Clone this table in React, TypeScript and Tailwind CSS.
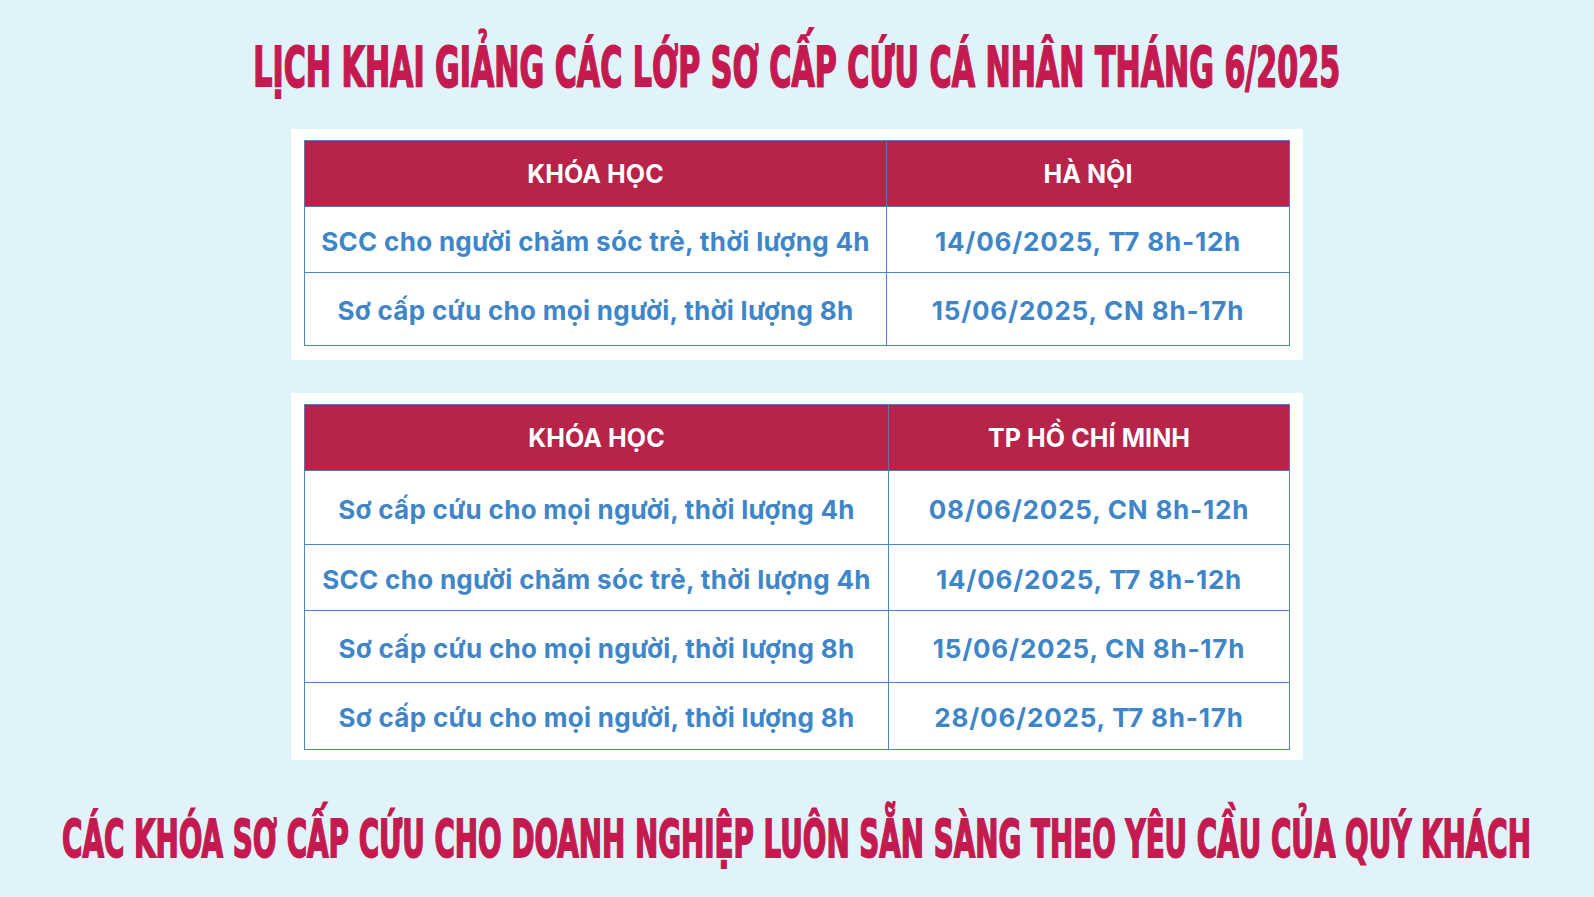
import React from "react";

const headFont = { fontFamily: '"DejaVu Sans Condensed", "DejaVu Sans", sans-serif' };

type Row = [string, string];

function ScheduleTable({ city, rows, col1, heights, pb }: { city: string; rows: Row[]; col1: string; heights: string[]; pb: string }) {
  return (
    <div className={`bg-white px-[13px] pt-[11px] ${pb}`}>
      <table className="w-[986px] border-collapse border-[1.5px] border-[#4a86c8] font-['Inter',sans-serif]">
        <thead>
          <tr className="h-[66px] bg-[#b8234a]">
            <th className={`${col1} pt-[3px] border-[1.5px] border-[#6a70b2] text-[25px] font-bold text-white tracking-[0.1px]`}>KHÓA HỌC</th>
            <th className="pt-[3px] border-[1.5px] border-[#6a70b2] text-[25px] font-bold text-white tracking-[0.1px]">{city}</th>
          </tr>
        </thead>
        <tbody>
          {rows.map((r, i) => (
            <tr key={i} className={heights[i]}>
              <td className="pt-[3px] border-[1.5px] border-[#4a86c8] text-center text-[26px] font-bold text-[#3f86c9] tracking-[0.3px]">{r[0]}</td>
              <td className="pt-[3px] border-[1.5px] border-[#4a86c8] text-center text-[26px] font-bold text-[#3f86c9] tracking-[0.8px]">{r[1]}</td>
            </tr>
          ))}
        </tbody>
      </table>
    </div>
  );
}

export default function App() {
  return (
    <div className="w-[1594px] h-[897px] bg-[#e0f3fb] overflow-hidden flex flex-col items-center">
      <div className="h-[129px] pt-[4px] w-full flex items-center justify-center">
        <h1
          style={headFont}
          className="whitespace-nowrap text-[56px] leading-none font-bold text-[#c41a4f] scale-x-[0.598] [-webkit-text-stroke:1.8px_#c41a4f]"
        >
          LỊCH KHAI GIẢNG CÁC LỚP SƠ CẤP CỨU CÁ NHÂN THÁNG 6/2025
        </h1>
      </div>
      <ScheduleTable
        city="HÀ NỘI"
        col1="w-[582px]"
        pb="pb-[14px]"
        heights={["h-[66px]", "h-[73px]"]}
        rows={[
          ["SCC cho người chăm sóc trẻ, thời lượng 4h", "14/06/2025, T7 8h-12h"],
          ["Sơ cấp cứu cho mọi người, thời lượng 8h", "15/06/2025, CN 8h-17h"],
        ]}
      />
      <div className="h-[33px] shrink-0" />
      <ScheduleTable
        city="TP HỒ CHÍ MINH"
        col1="w-[584px]"
        pb="pb-[10px]"
        heights={["h-[74px]", "h-[66px]", "h-[72px]", "h-[67px]"]}
        rows={[
          ["Sơ cấp cứu cho mọi người, thời lượng 4h", "08/06/2025, CN 8h-12h"],
          ["SCC cho người chăm sóc trẻ, thời lượng 4h", "14/06/2025, T7 8h-12h"],
          ["Sơ cấp cứu cho mọi người, thời lượng 8h", "15/06/2025, CN 8h-17h"],
          ["Sơ cấp cứu cho mọi người, thời lượng 8h", "28/06/2025, T7 8h-17h"],
        ]}
      />
      <div className="flex-1 pt-[20px] w-full flex items-center justify-center">
        <p
          style={headFont}
          className="whitespace-nowrap text-[52px] leading-none font-bold text-[#c41a4f] scale-x-[0.594] [-webkit-text-stroke:1.8px_#c41a4f]"
        >
          CÁC KHÓA SƠ CẤP CỨU CHO DOANH NGHIỆP LUÔN SẴN SÀNG THEO YÊU CẦU CỦA QUÝ KHÁCH
        </p>
      </div>
    </div>
  );
}
